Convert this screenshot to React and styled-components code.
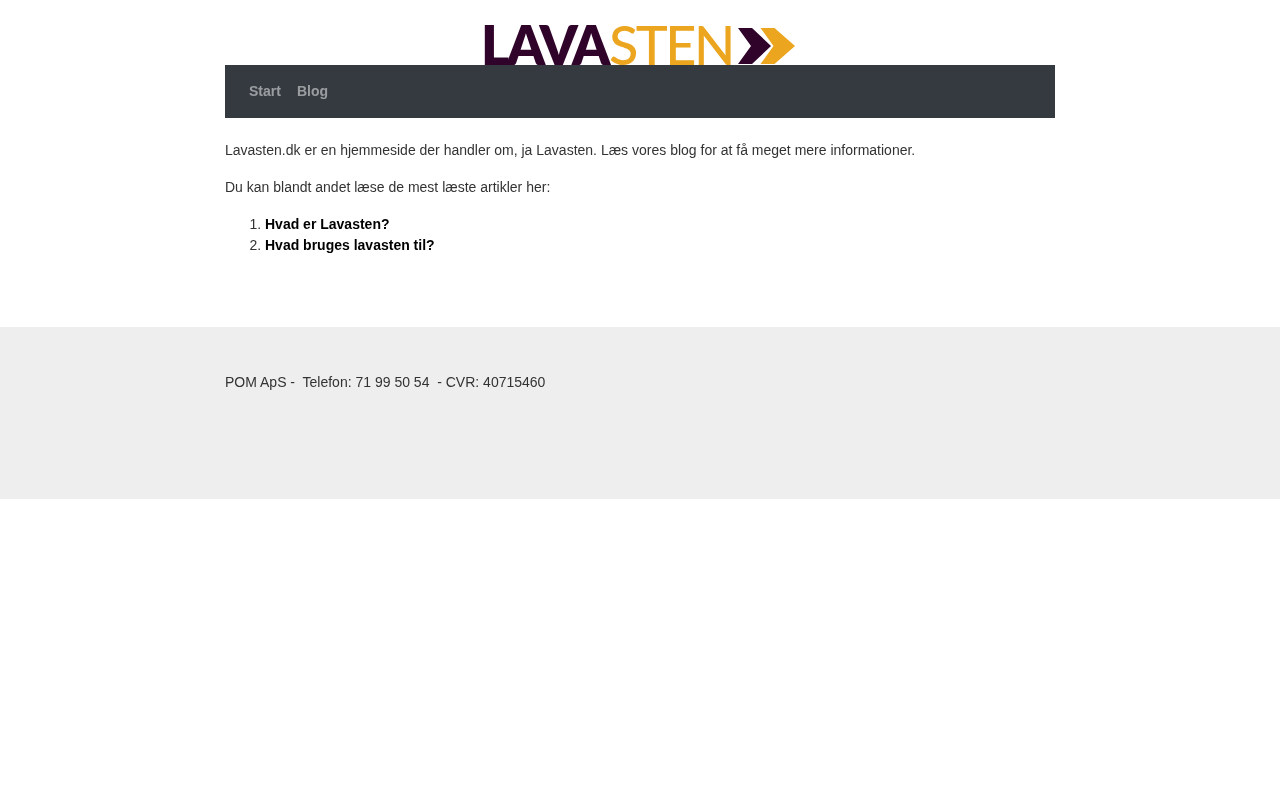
import styled, { createGlobalStyle } from 'styled-components'

const GlobalStyle = createGlobalStyle`
  body {
    margin: 0;
    background: #fff;
    color: #333;
    font-family: "Liberation Sans", Arial, sans-serif;
    font-size: 14px;
    line-height: 21px;
  }

  #root {
    will-change: transform;
  }
`

const Container = styled.div`
  width: 830px;
  margin: 0 auto;
`

const LogoRow = styled.div`
  display: flex;
  justify-content: center;
  height: 65px;
`

const Logo = styled.a`
  display: flex;
  align-items: flex-start;
  width: 310px;
  height: 65px;
  text-decoration: none;
`

const LogoWord = styled.span`
  font-family: Lato, "Noto Sans", sans-serif;
  font-size: 54px;
  line-height: 40px;
  margin-top: 25px;
  white-space: nowrap;
  font-weight: ${(p) => (p.$accent ? 500 : 800)};
  color: ${(p) => (p.$accent ? '#eba51f' : '#30042a')};
  letter-spacing: -2.5px;
  margin-left: ${(p) => (p.$accent ? '1px' : '-4px')};
`

const Chevrons = styled.svg`
  flex: none;
  width: 58px;
  height: 38px;
  margin: 27px 0 0 auto;
`

const Navbar = styled.nav`
  display: flex;
  gap: 16px;
  height: 53px;
  align-items: center;
  padding: 0 24px;
  background: #343a40;
  position: relative;
`

const NavLink = styled.a`
  color: rgba(255, 255, 255, 0.5);
  font-weight: 700;
  text-decoration: none;
`

const Main = styled.main`
  padding-top: 22px;
  height: 209px;
  box-sizing: border-box;
`

const Text = styled.p`
  margin: 0 0 16px;
`

const List = styled.ol`
  margin: 0;
  padding-left: 40px;
`

const ArticleLink = styled.a`
  color: #000;
  font-weight: 700;
  text-decoration: none;
`

const Footer = styled.footer`
  height: 172px;
  padding-top: 45px;
  box-sizing: border-box;
  background: #eee;
`

const FooterText = styled.p`
  margin: 0;
  white-space: pre-wrap;
`

export default function App() {
  return (
    <>
      <GlobalStyle />
      <Container>
        <LogoRow>
          <Logo href='#'>
            <LogoWord>LAVA</LogoWord>
            <LogoWord $accent>STEN</LogoWord>
            <Chevrons viewBox='0 0 58 38'>
              <polygon points='1,1 15,1 34,19 15,37 1,37 14,19' fill='#30042a' />
              <polygon points='23.5,1 37.5,1 58,19 37.5,37 23.5,37 36.5,19' fill='#eba51f' />
            </Chevrons>
          </Logo>
        </LogoRow>
        <Navbar>
          <NavLink href='#'>Start</NavLink>
          <NavLink href='#'>Blog</NavLink>
        </Navbar>
        <Main>
          <Text>Lavasten.dk er en hjemmeside der handler om, ja Lavasten. Læs vores blog for at få meget mere informationer.</Text>
          <Text>Du kan blandt andet læse de mest læste artikler her:</Text>
          <List>
            <li><ArticleLink href='#'>Hvad er Lavasten?</ArticleLink></li>
            <li><ArticleLink href='#'>Hvad bruges lavasten til?</ArticleLink></li>
          </List>
        </Main>
      </Container>
      <Footer>
        <Container>
          <FooterText>{'POM ApS -  Telefon: 71 99 50 54  - CVR: 40715460'}</FooterText>
        </Container>
      </Footer>
    </>
  )
}
